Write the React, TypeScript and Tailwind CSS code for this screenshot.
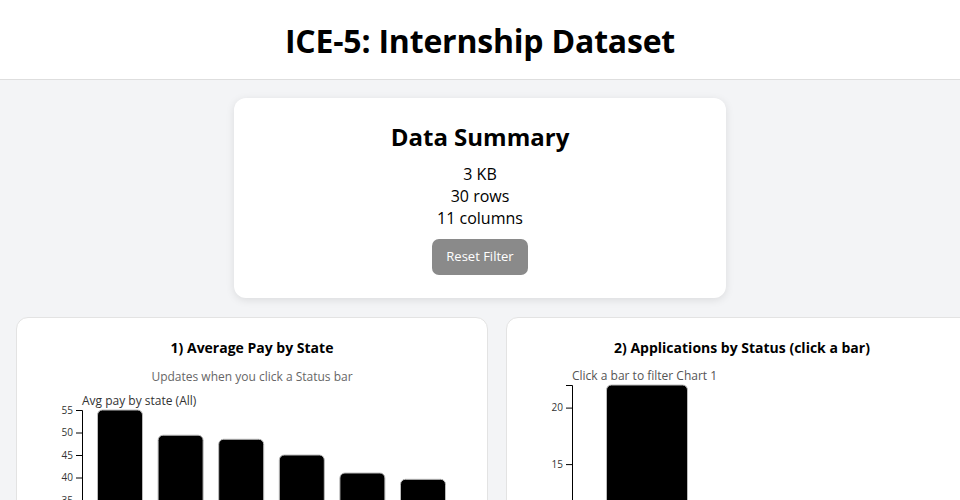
import React from "react";

const font = { fontFamily: '"Open Sans", "Noto Sans", sans-serif' };

function Chart1() {
  const vals = [55, 49.4, 48.5, 45, 41, 39.6];
  const y = (v: number) => 20 + (55 - v) * 4.5;
  const ticks = [55, 50, 45, 40, 35, 30, 25, 20];
  return (
    <svg width="470" height="140" className="block" style={font}>
      <text x="65" y="15" fontSize="12" fill="#333">Avg pay by state (All)</text>
      {vals.map((v, i) => (
        <rect key={i} x={80.5 + i * 60.6} y={y(v)} width="45" height={200} rx="5" fill="#000" stroke="#bbb" strokeWidth="1" />
      ))}
      <path d="M59,20.5 H65.5 V200" stroke="#000" fill="none" strokeWidth="1" />
      {ticks.map((t) => (
        <g key={t}>
          <line x1="59" x2="65" y1={y(t) + 0.5} y2={y(t) + 0.5} stroke="#000" />
          <text x="56" y={y(t) + 3.5} fontSize="10" textAnchor="end" fill="#333">{t}</text>
        </g>
      ))}
    </svg>
  );
}

function Chart2() {
  const y = (v: number) => 20 + (22 - v) * 11.3;
  const ticks = [20, 15, 10, 5];
  return (
    <svg width="470" height="140" className="block" style={font}>
      <text x="65" y="15" fontSize="12" fill="#555">Click a bar to filter Chart 1</text>
      <rect x="99.5" y={y(22)} width="81" height={300} rx="5" fill="#000" stroke="#bbb" strokeWidth="1" />
      <path d="M59,20.5 H65.5 V200" stroke="#000" fill="none" strokeWidth="1" />
      {ticks.map((t) => (
        <g key={t}>
          <line x1="59" x2="65" y1={y(t) + 0.5} y2={y(t) + 0.5} stroke="#000" />
          <text x="56" y={y(t) + 3.5} fontSize="10" textAnchor="end" fill="#333">{t}</text>
        </g>
      ))}
    </svg>
  );
}

export default function App() {
  return (
    <div className="min-h-screen bg-[#f3f4f6] text-black" style={font}>
      <header className="h-[80px] bg-white border-b border-[#dedede] flex items-center justify-center">
        <h1 className="text-[32px] font-bold leading-none tracking-[-0.2px] mt-[2px]">ICE-5: Internship Dataset</h1>
      </header>
      <main className="pt-[18px]">
        <section className="mx-auto w-[492px] h-[200px] bg-white rounded-[12px] shadow-[0_2px_8px_rgba(0,0,0,0.1)] flex flex-col items-center pt-[21px]">
          <h2 className="text-[24px] font-bold leading-[36px]">Data Summary</h2>
          <div className="mt-[8px] text-[16px] leading-[22px] text-center">
            <div>3 KB</div>
            <div>30 rows</div>
            <div>11 columns</div>
          </div>
          <button className="mt-[10px] w-[96px] h-[36px] rounded-[7px] bg-[#8a8a8a] text-white text-[13px]">Reset Filter</button>
        </section>
        <div className="flex gap-[18px] pl-[16px] pt-[19px] w-max">
          <section className="w-[472px] h-[300px] bg-white border border-[#e3e3e3] rounded-[12px] overflow-hidden">
            <h3 className="mt-[19px] text-[14px] font-bold leading-[21px] text-center">1) Average Pay by State</h3>
            <p className="mt-[10px] text-[12px] leading-[18px] text-[#666] text-center">Updates when you click a Status bar</p>
            <div className="mt-[4px]"><Chart1 /></div>
          </section>
          <section className="w-[472px] h-[300px] bg-white border border-[#e3e3e3] rounded-[12px] overflow-hidden">
            <h3 className="mt-[19px] text-[14px] font-bold leading-[21px] text-center">2) Applications by Status (click a bar)</h3>
            <div className="mt-[7px]"><Chart2 /></div>
          </section>
        </div>
      </main>
    </div>
  );
}
